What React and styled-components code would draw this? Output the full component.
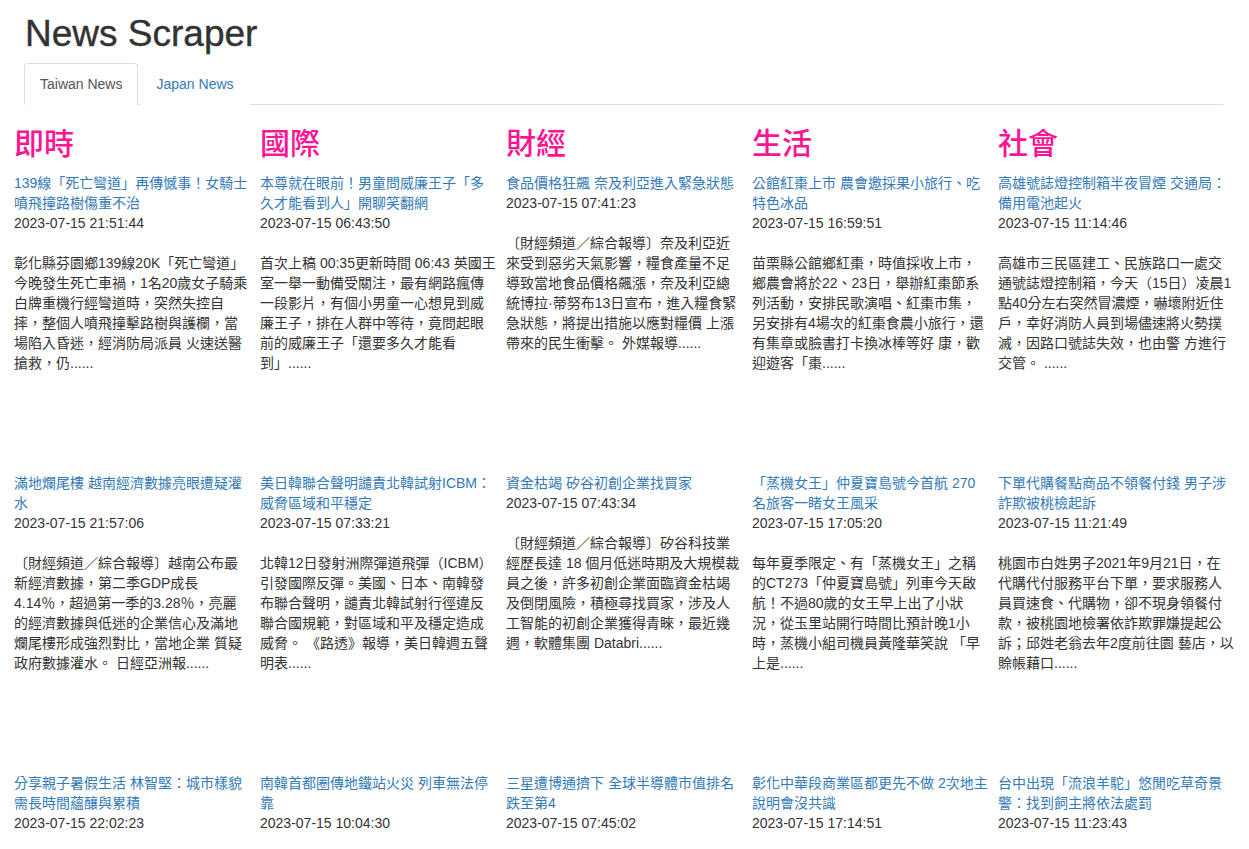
import React from "react";
import styled, { createGlobalStyle } from "styled-components";

const GlobalStyle = createGlobalStyle`
  html, body {
    margin: 0;
    overflow: hidden;
    background: #fff;
  }
  body {
    font-family: "Liberation Sans", "Noto Sans CJK TC", sans-serif;
    font-size: 14px;
    line-height: 20px;
    color: #333;
  }
  * {
    box-sizing: border-box;
  }
`;

const Header = styled.div`
  padding: 0 26px 0 24px;
`;

const Title = styled.h1`
  margin: 14px 0 9px 1px;
  font-size: 37px;
  line-height: 40px;
  font-weight: 400;
  color: #333;
  -webkit-text-stroke: 0.4px #333;
`;

const Tabs = styled.ul`
  display: flex;
  margin: 0;
  padding: 0;
  list-style: none;
  border-bottom: 1px solid #ddd;
`;

const Tab = styled.li`
  margin: 0 2px -1px 0;
  padding: 10px 15px;
  border: 1px solid ${(p) => (p.$active ? "#ddd" : "transparent")};
  border-bottom-color: ${(p) => (p.$active ? "#fff" : "transparent")};
  border-radius: 4px 4px 0 0;
  background: #fff;
  color: ${(p) => (p.$active ? "#555" : "#337ab7")};
  cursor: pointer;
`;

const Columns = styled.div`
  display: grid;
  grid-template-columns: repeat(5, 246px);
  margin-left: 9px;
`;

const Column = styled.section`
  padding: 0 5px;
`;

const Category = styled.h2`
  margin: 22px 0 13px;
  font-size: 30px;
  line-height: 33px;
  font-weight: 500;
  color: #ff1493;
`;

const Item = styled.div`
  height: 300px;
  overflow: hidden;
`;

const Headline = styled.a`
  display: block;
  color: #337ab7;
  text-decoration: none;
  cursor: pointer;
`;

const Time = styled.div`
  color: #333;
`;

const Summary = styled.p`
  margin: 20px 0 0;
`;

const news = [
  {
    name: "即時",
    items: [
      {
        title: "139線「死亡彎道」再傳憾事！女騎士噴飛撞路樹傷重不治",
        time: "2023-07-15 21:51:44",
        summary:
          "彰化縣芬園鄉139線20K「死亡彎道」今晚發生死亡車禍，1名20歲女子騎乘白牌重機行經彎道時，突然失控自摔，整個人噴飛撞擊路樹與護欄，當場陷入昏迷，經消防局派員 火速送醫搶救，仍......",
      },
      {
        title: "滿地爛尾樓 越南經濟數據亮眼遭疑灌水",
        time: "2023-07-15 21:57:06",
        summary:
          "〔財經頻道／綜合報導〕越南公布最新經濟數據，第二季GDP成長4.14％，超過第一季的3.28％，亮麗的經濟數據與低迷的企業信心及滿地爛尾樓形成強烈對比，當地企業 質疑政府數據灌水。 日經亞洲報......",
      },
      {
        title: "分享親子暑假生活 林智堅：城市樣貌需長時間蘊釀與累積",
        time: "2023-07-15 22:02:23",
      },
    ],
  },
  {
    name: "國際",
    items: [
      {
        title: "本尊就在眼前！男童問威廉王子「多久才能看到人」開聊笑翻網",
        time: "2023-07-15 06:43:50",
        summary:
          "首次上稿 00:35更新時間 06:43 英國王室一舉一動備受關注，最有網路瘋傳一段影片，有個小男童一心想見到威廉王子，排在人群中等待，竟問起眼前的威廉王子「還要多久才能看到」......",
      },
      {
        title: "美日韓聯合聲明譴責北韓試射ICBM：威脅區域和平穩定",
        time: "2023-07-15 07:33:21",
        summary:
          "北韓12日發射洲際彈道飛彈（ICBM）引發國際反彈。美國、日本、南韓發布聯合聲明，譴責北韓試射行徑違反聯合國規範，對區域和平及穩定造成威脅。 《路透》報導，美日韓週五聲明表......",
      },
      {
        title: "南韓首都圈傳地鐵站火災 列車無法停靠",
        time: "2023-07-15 10:04:30",
      },
    ],
  },
  {
    name: "財經",
    items: [
      {
        title: "食品價格狂飆 奈及利亞進入緊急狀態",
        time: "2023-07-15 07:41:23",
        summary:
          "〔財經頻道／綜合報導〕奈及利亞近來受到惡劣天氣影響，糧食產量不足導致當地食品價格飆漲，奈及利亞總統博拉·蒂努布13日宣布，進入糧食緊急狀態，將提出措施以應對糧價 上漲帶來的民生衝擊。 外媒報導......",
      },
      {
        title: "資金枯竭 矽谷初創企業找買家",
        time: "2023-07-15 07:43:34",
        summary:
          "〔財經頻道／綜合報導〕矽谷科技業經歷長達 18 個月低迷時期及大規模裁員之後，許多初創企業面臨資金枯竭及倒閉風險，積極尋找買家，涉及人工智能的初創企業獲得青睞，最近幾週，軟體集團 Databri......",
      },
      {
        title: "三星遭博通擠下 全球半導體市值排名跌至第4",
        time: "2023-07-15 07:45:02",
      },
    ],
  },
  {
    name: "生活",
    items: [
      {
        title: "公館紅棗上市 農會邀採果小旅行、吃特色冰品",
        time: "2023-07-15 16:59:51",
        summary:
          "苗栗縣公館鄉紅棗，時值採收上市，鄉農會將於22、23日，舉辦紅棗節系列活動，安排民歌演唱、紅棗市集，另安排有4場次的紅棗食農小旅行，還有集章或臉書打卡換冰棒等好 康，歡迎遊客「棗......",
      },
      {
        title: "「蒸機女王」仲夏寶島號今首航 270名旅客一睹女王風采",
        time: "2023-07-15 17:05:20",
        summary:
          "每年夏季限定、有「蒸機女王」之稱的CT273「仲夏寶島號」列車今天啟航！不過80歲的女王早上出了小狀況，從玉里站開行時間比預計晚1小時，蒸機小組司機員黃隆華笑說 「早上是......",
      },
      {
        title: "彰化中華段商業區都更先不做 2次地主說明會沒共識",
        time: "2023-07-15 17:14:51",
      },
    ],
  },
  {
    name: "社會",
    items: [
      {
        title: "高雄號誌燈控制箱半夜冒煙 交通局：備用電池起火",
        time: "2023-07-15 11:14:46",
        summary:
          "高雄市三民區建工、民族路口一處交通號誌燈控制箱，今天（15日）凌晨1點40分左右突然冒濃煙，嚇壞附近住戶，幸好消防人員到場儘速將火勢撲滅，因路口號誌失效，也由警 方進行交管。 ......",
      },
      {
        title: "下單代購餐點商品不領餐付錢 男子涉詐欺被桃檢起訴",
        time: "2023-07-15 11:21:49",
        summary:
          "桃園市白姓男子2021年9月21日，在代購代付服務平台下單，要求服務人員買速食、代購物，卻不現身領餐付款，被桃園地檢署依詐欺罪嫌提起公訴；邱姓老翁去年2度前往園 藝店，以賒帳藉口......",
      },
      {
        title: "台中出現「流浪羊駝」悠閒吃草奇景 警：找到飼主將依法處罰",
        time: "2023-07-15 11:23:43",
      },
    ],
  },
];

const App = () => {
  return (
    <>
      <GlobalStyle />
      <Header>
        <Title>News Scraper</Title>
        <Tabs>
          <Tab $active>Taiwan News</Tab>
          <Tab>Japan News</Tab>
        </Tabs>
      </Header>
      <Columns>
        {news.map((column) => (
          <Column key={column.name}>
            <Category>{column.name}</Category>
            {column.items.map((item, index) => (
              <Item key={item.time + index}>
                <Headline>{item.title}</Headline>
                <Time>{item.time}</Time>
                {item.summary && <Summary>{item.summary}</Summary>}
              </Item>
            ))}
          </Column>
        ))}
      </Columns>
    </>
  );
};

export default App;
